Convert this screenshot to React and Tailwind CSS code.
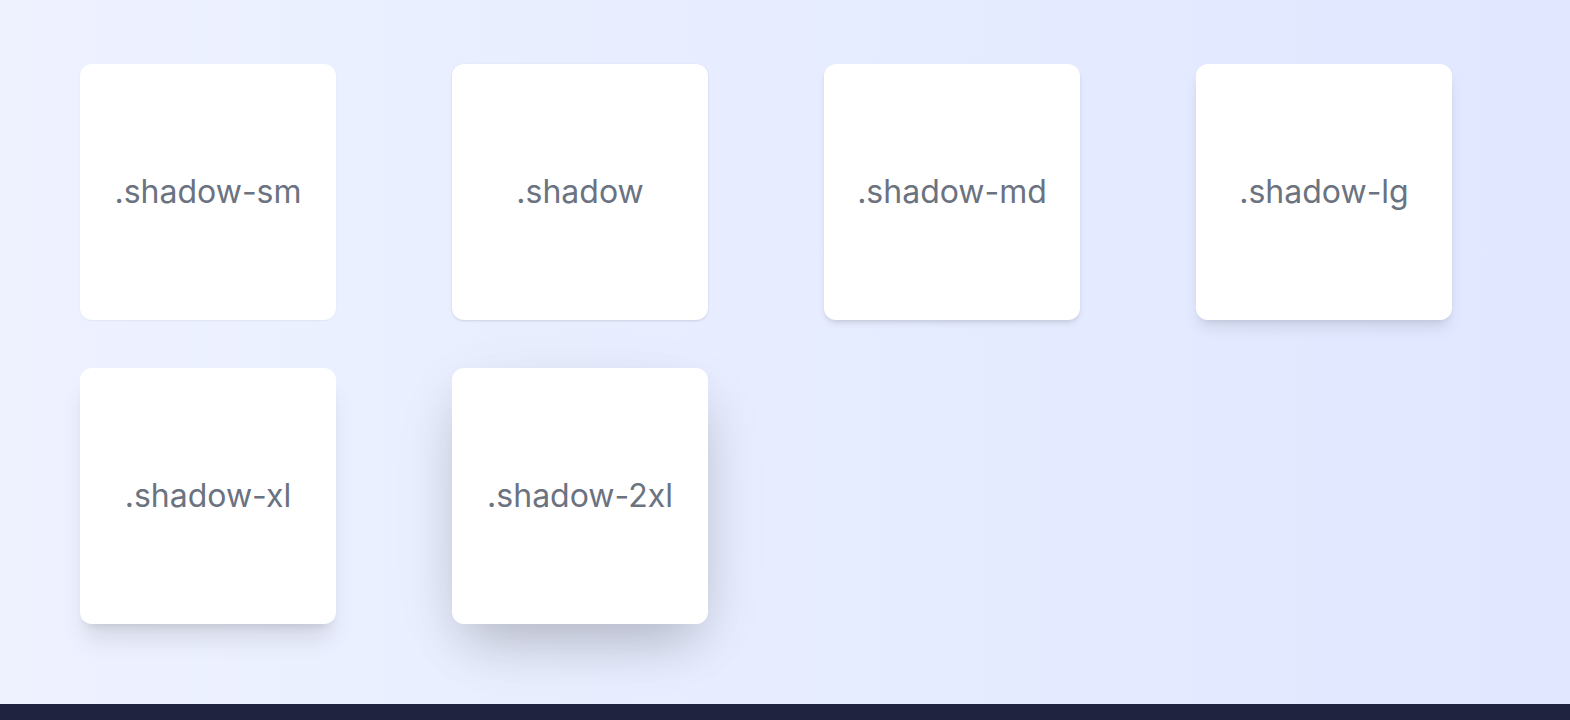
export default function App() {
  const items = [
    { label: ".shadow-sm", cls: "shadow-[0_1px_2px_0_rgb(0_0_0/0.05)]" },
    { label: ".shadow", cls: "shadow-[0_1px_3px_0_rgb(0_0_0/0.1),0_1px_2px_-1px_rgb(0_0_0/0.1)]" },
    { label: ".shadow-md", cls: "shadow-md" },
    { label: ".shadow-lg", cls: "shadow-lg" },
    { label: ".shadow-xl", cls: "shadow-xl" },
    { label: ".shadow-2xl", cls: "shadow-[0_25px_50px_-12px_rgb(0_0_0/0.2),0_20px_80px_-10px_rgb(0_0_0/0.08)]" },
  ];
  return (
    <div className="min-h-screen bg-[#1f2340]" style={{ fontFamily: "Inter, 'Noto Sans', sans-serif" }}>
      <div className="bg-linear-to-r from-[#eef2ff] to-[#e0e7ff] pt-16 pb-20 px-20">
        <div className="grid grid-cols-[repeat(4,256px)] gap-x-[116px] gap-y-12">
          {items.map((it) => (
            <div
              key={it.label}
              className={`w-64 h-64 rounded-xl bg-white flex items-center justify-center ${it.cls}`}
            >
              <span className="text-[32px] leading-none text-[#6b7280]">{it.label}</span>
            </div>
          ))}
        </div>
      </div>
    </div>
  );
}
